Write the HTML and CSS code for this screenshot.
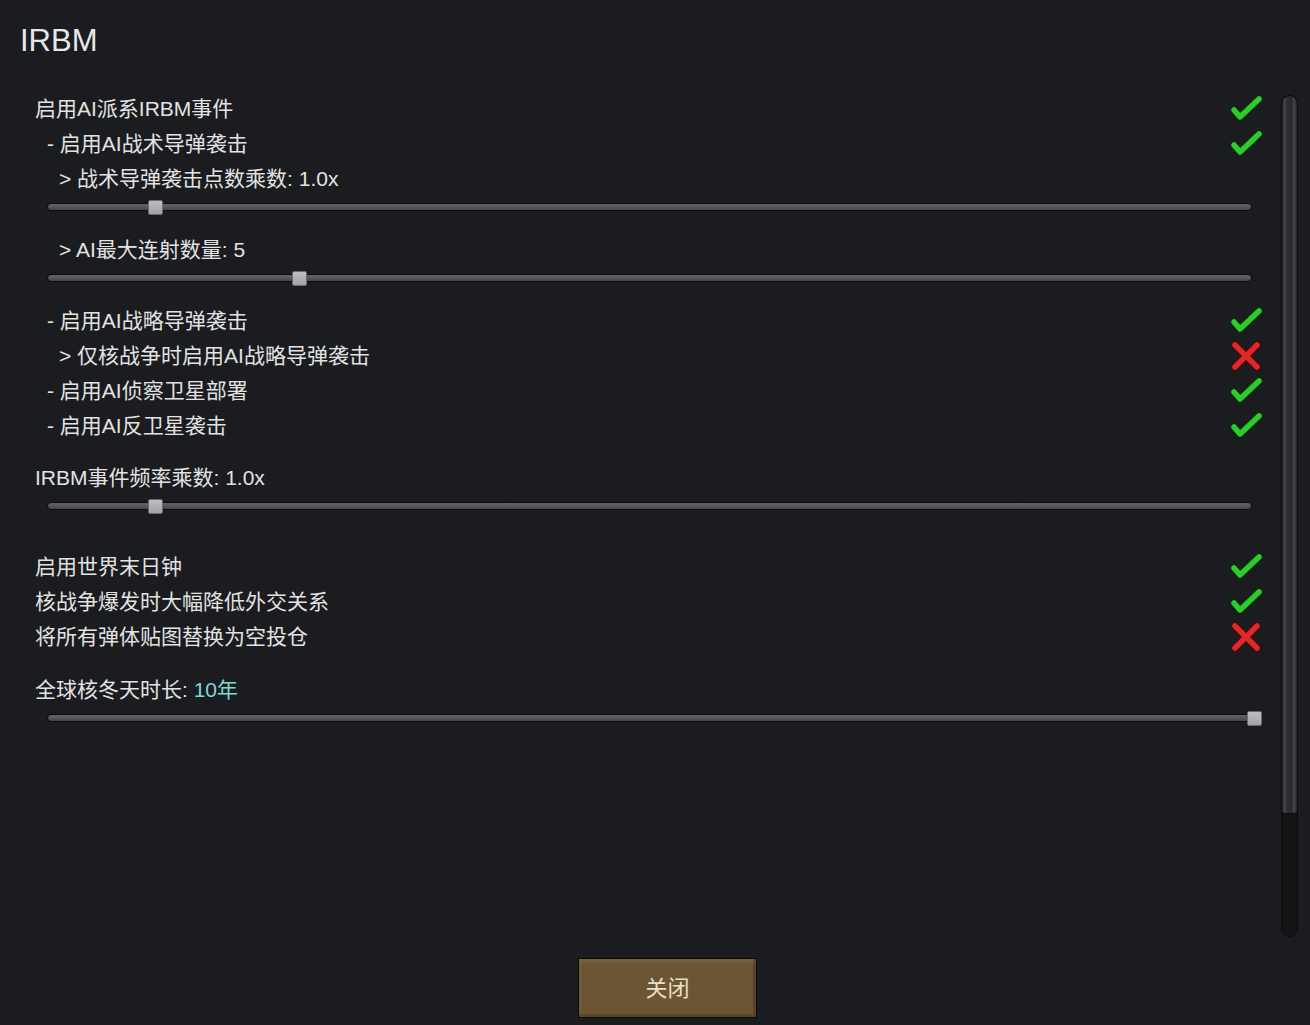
FILE: index.html
```html
<!DOCTYPE html>
<html lang="zh-CN">
<head>
<meta charset="utf-8">
<title>IRBM</title>
<link rel="stylesheet" href="styles.css">
</head>
<body>
<svg width="0" height="0" class="defs">
  <defs>
    <symbol id="ok" viewBox="0 0 34 30">
      <path d="M5 16 L11 23 L30 5" fill="none" stroke="#0d2b0e" stroke-width="8.5" stroke-linecap="round" stroke-linejoin="round"/>
      <path d="M5 16 L11 23 L30 5" fill="none" stroke="#2fcb2c" stroke-width="5.5" stroke-linecap="round" stroke-linejoin="round"/>
    </symbol>
    <symbol id="no" viewBox="0 0 34 30">
      <path d="M6 4 L28 26 M28 4 L6 26" fill="none" stroke="#3a0d0e" stroke-width="8.5" stroke-linecap="round"/>
      <path d="M6 4 L28 26 M28 4 L6 26" fill="none" stroke="#e0282b" stroke-width="5.5" stroke-linecap="round"/>
    </symbol>
  </defs>
</svg>
<header class="header"><h1 class="title">IRBM</h1></header>
<main class="main">
  <section class="content">
    <div class="row"><span class="label">启用AI派系IRBM事件</span><svg class="icon"><use href="#ok"/></svg></div>
    <div class="row"><span class="label l1">- 启用AI战术导弹袭击</span><svg class="icon"><use href="#ok"/></svg></div>
    <div class="row"><span class="label l2">&gt; 战术导弹袭击点数乘数: 1.0x</span></div>
    <div class="slider"><div class="track"></div><div class="thumb" style="left:101px"></div></div>

    <div class="row gap14"><span class="label l2">&gt; AI最大连射数量: 5</span></div>
    <div class="slider"><div class="track"></div><div class="thumb" style="left:245px"></div></div>

    <div class="row gap14"><span class="label l1">- 启用AI战略导弹袭击</span><svg class="icon"><use href="#ok"/></svg></div>
    <div class="row"><span class="label l2">&gt; 仅核战争时启用AI战略导弹袭击</span><svg class="icon"><use href="#no"/></svg></div>
    <div class="row"><span class="label l1">- 启用AI侦察卫星部署</span><svg class="icon"><use href="#ok"/></svg></div>
    <div class="row"><span class="label l1">- 启用AI反卫星袭击</span><svg class="icon"><use href="#ok"/></svg></div>

    <div class="row gap17"><span class="label">IRBM事件频率乘数: 1.0x</span></div>
    <div class="slider"><div class="track"></div><div class="thumb" style="left:101px"></div></div>

    <div class="row gap32"><span class="label">启用世界末日钟</span><svg class="icon"><use href="#ok"/></svg></div>
    <div class="row"><span class="label">核战争爆发时大幅降低外交关系</span><svg class="icon"><use href="#ok"/></svg></div>
    <div class="row"><span class="label">将所有弹体贴图替换为空投仓</span><svg class="icon"><use href="#no"/></svg></div>

    <div class="row gap18"><span class="label">全球核冬天时长: <span class="accent">10年</span></span></div>
    <div class="slider wide"><div class="track"></div><div class="thumb" style="left:1200px"></div></div>
  </section>
  <div class="scrollbar"><div class="scroll-thumb"></div></div>
</main>
<footer class="footer"><button class="close-btn">关闭</button></footer>
</body>
</html>
```
FILE: styles.css
```css
html, body {
  margin: 0;
  padding: 0;
  background: #1a1c20;
  overflow: hidden;
}
body {
  width: 1310px;
  height: 1025px;
  font-family: "Liberation Sans", "Noto Sans CJK SC", sans-serif;
  color: #e3e3e3;
}
.defs { position: absolute; width: 0; height: 0; }
.header {
  height: 91px;
  box-sizing: border-box;
  padding: 21px 0 0 20px;
}
.title {
  margin: 0;
  font-weight: normal;
  font-size: 31px;
  line-height: 40px;
  color: #e8e8e8;
}
.main {
  display: flex;
  height: 867px;
}
.content {
  width: 1228px;
  margin-left: 35px;
  display: flex;
  flex-direction: column;
}
.row {
  height: 35px;
  display: flex;
  align-items: center;
  justify-content: space-between;
  flex-shrink: 0;
}
.label {
  font-size: 21px;
  line-height: 35px;
  white-space: nowrap;
}
.l1 { padding-left: 12px; }
.l2 { padding-left: 24px; }
.accent { color: #7fd9d2; }
.icon { width: 34px; height: 30px; flex-shrink: 0; }
.gap14 { margin-top: 14px; }
.gap17 { margin-top: 17px; }
.gap32 { margin-top: 32px; }
.gap18 { margin-top: 18px; }
.slider {
  position: relative;
  height: 22px;
  margin-left: 12px;
  width: 1205px;
  flex-shrink: 0;
}
.slider.wide { width: 1213px; }
.track {
  margin-top: 7px;
  height: 8px;
  box-sizing: border-box;
  border: 1px solid #0c0d0f;
  border-radius: 4px;
  background: linear-gradient(to bottom, #626365 0, #5a5b5d 40%, #454649 100%);
}
.thumb {
  position: absolute;
  top: 4px;
  width: 15px;
  height: 15px;
  box-sizing: border-box;
  border: 1px solid #6a6b6e;
  border-radius: 2px;
  background: linear-gradient(to bottom, #bdbec0, #a2a3a5);
}
.scrollbar {
  margin: 4px 0 0 18px;
  width: 17px;
  height: 842px;
  box-sizing: border-box;
  border: 1px solid #0b0c0d;
  border-radius: 9px;
  background: #131416;
  overflow: hidden;
  flex-shrink: 0;
}
.scroll-thumb {
  height: 717px;
  border-radius: 8px 8px 3px 3px;
  border-bottom: 1px solid #0b0c0d;
  background: linear-gradient(to right, #202124 0, #46474a 18%, #2c2d30 35%, #2a2b2e 65%, #46474a 82%, #202124 100%);
}
.footer {
  display: flex;
  justify-content: center;
  padding-left: 25px;
}
.close-btn {
  width: 179px;
  height: 60px;
  box-sizing: border-box;
  border: 1px solid #0a0a0a;
  background: #6c5532;
  box-shadow: inset 0 4px 0 rgba(255, 230, 180, 0.06), inset -3px -3px 0 rgba(0, 0, 0, 0.18), inset 3px 0 0 rgba(255, 230, 180, 0.04);
  color: #eae0c6;
  font-family: "Liberation Sans", "Noto Sans CJK SC", sans-serif;
  font-size: 22px;
  padding: 0 0 4px 0;
  cursor: pointer;
}
```
